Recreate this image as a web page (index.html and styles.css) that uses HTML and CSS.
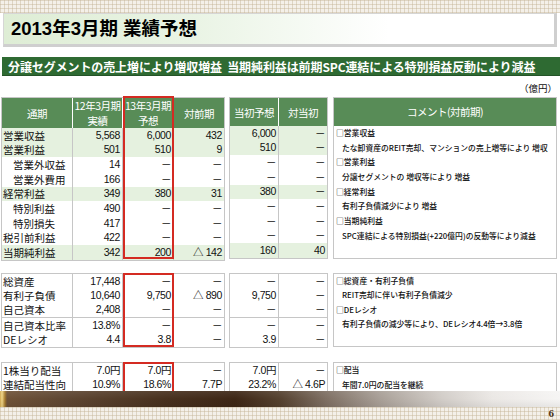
FILE: index.html
```html
<!DOCTYPE html>
<html lang="ja">
<head>
<meta charset="utf-8">
<title>2013年3月期 業績予想</title>
<link rel="stylesheet" href="styles.css">
</head>
<body>
<div class="slide">
  <div class="pattern pattern-top"></div>
  <header class="title-box"><h1 class="title">2013年3月期 業績予想</h1></header>
  <div class="banner">分譲セグメントの売上増により増収増益&nbsp;&nbsp;当期純利益は前期SPC連結による特別損益反動により減益</div>
  <div class="unit">（億円）</div>

  <section class="sec sec-pl">
    <table class="tbl tbl-a">
      <colgroup><col class="c-lab"><col class="c-num"><col class="c-num2"><col class="c-num"></colgroup>
      <thead>
        <tr class="hrow"><th>通期</th><th>12年3月期<br>実績</th><th>13年3月期<br>予想</th><th>対前期</th></tr>
      </thead>
      <tbody>
        <tr class="g"><td class="lab">営業収益</td><td>5,568</td><td>6,000</td><td>432</td></tr>
        <tr class="g"><td class="lab">営業利益</td><td>501</td><td>510</td><td>9</td></tr>
        <tr><td class="lab sub">営業外収益</td><td>14</td><td>－</td><td>－</td></tr>
        <tr><td class="lab sub">営業外費用</td><td>166</td><td>－</td><td>－</td></tr>
        <tr class="g"><td class="lab">経常利益</td><td>349</td><td>380</td><td>31</td></tr>
        <tr><td class="lab sub">特別利益</td><td>490</td><td>－</td><td>－</td></tr>
        <tr><td class="lab sub">特別損失</td><td>417</td><td>－</td><td>－</td></tr>
        <tr><td class="lab">税引前利益</td><td>422</td><td>－</td><td>－</td></tr>
        <tr class="g"><td class="lab">当期純利益</td><td>342</td><td>200</td><td>△ 142</td></tr>
      </tbody>
    </table>
    <table class="tbl tbl-b">
      <colgroup><col class="c-b1"><col class="c-b2"></colgroup>
      <thead>
        <tr class="hrow"><th>当初予想</th><th>対当初</th></tr>
      </thead>
      <tbody>
        <tr class="g"><td>6,000</td><td>－</td></tr>
        <tr class="g"><td>510</td><td>－</td></tr>
        <tr><td>－</td><td>－</td></tr>
        <tr><td>－</td><td>－</td></tr>
        <tr class="g"><td>380</td><td>－</td></tr>
        <tr><td>－</td><td>－</td></tr>
        <tr><td>－</td><td>－</td></tr>
        <tr><td>－</td><td>－</td></tr>
        <tr class="g"><td>160</td><td>40</td></tr>
      </tbody>
    </table>
    <div class="comment">
      <div class="chead">コメント(対前期)</div>
      <div class="cbody">
        <p class="pt">□営業収益</p>
        <p class="ln">たな卸資産のREIT売却、マンションの売上増等により 増収</p>
        <p class="pt">□営業利益</p>
        <p class="ln">分譲セグメントの 増収等により 増益</p>
        <p class="pt">□経常利益</p>
        <p class="ln">有利子負債減少により 増益</p>
        <p class="pt">□当期純利益</p>
        <p class="ln">SPC連結による特別損益(+220億円)の反動等により減益</p>
      </div>
    </div>
    <div class="hl hl-pl"></div>
  </section>

  <section class="sec sec-bs">
    <table class="tbl tbl-a">
      <colgroup><col class="c-lab"><col class="c-num"><col class="c-num2"><col class="c-num"></colgroup>
      <tbody>
        <tr><td class="lab">総資産</td><td>17,448</td><td>－</td><td>－</td></tr>
        <tr><td class="lab">有利子負債</td><td>10,640</td><td>9,750</td><td>△ 890</td></tr>
        <tr><td class="lab">自己資本</td><td>2,408</td><td>－</td><td>－</td></tr>
        <tr class="sep"><td class="lab">自己資本比率</td><td>13.8%</td><td>－</td><td>－</td></tr>
        <tr><td class="lab">DEレシオ</td><td>4.4</td><td>3.8</td><td>－</td></tr>
      </tbody>
    </table>
    <table class="tbl tbl-b">
      <colgroup><col class="c-b1"><col class="c-b2"></colgroup>
      <tbody>
        <tr><td>－</td><td>－</td></tr>
        <tr><td>9,750</td><td>－</td></tr>
        <tr><td>－</td><td>－</td></tr>
        <tr class="sep"><td>－</td><td>－</td></tr>
        <tr><td>3.9</td><td>－</td></tr>
      </tbody>
    </table>
    <div class="comment">
      <div class="cbody">
        <p class="pt">□総資産・有利子負債</p>
        <p class="ln">REIT売却に伴い有利子負債減少</p>
        <p class="pt">□DEレシオ</p>
        <p class="ln">有利子負債の減少等により、DEレシオ4.4倍→3.8倍</p>
      </div>
    </div>
    <div class="hl hl-bs"></div>
  </section>

  <section class="sec sec-dv">
    <table class="tbl tbl-a">
      <colgroup><col class="c-lab"><col class="c-num"><col class="c-num2"><col class="c-num"></colgroup>
      <tbody>
        <tr><td class="lab">1株当り配当</td><td>7.0円</td><td>7.0円</td><td>－</td></tr>
        <tr><td class="lab">連結配当性向</td><td>10.9%</td><td>18.6%</td><td>7.7P</td></tr>
      </tbody>
    </table>
    <table class="tbl tbl-b">
      <colgroup><col class="c-b1"><col class="c-b2"></colgroup>
      <tbody>
        <tr><td>7.0円</td><td>－</td></tr>
        <tr><td>23.2%</td><td>△ 4.6P</td></tr>
      </tbody>
    </table>
    <div class="comment">
      <div class="cbody">
        <p class="pt">□配当</p>
        <p class="ln">年間7.0円の配当を継続</p>
      </div>
    </div>
    <div class="hl hl-dv"></div>
  </section>

  <div class="bottom-bar"></div>
  <footer class="pattern pattern-bottom"><span class="page-no">6</span></footer>
</div>
</body>
</html>
```
FILE: styles.css
```css
html, body {
  margin: 0;
  padding: 0;
  background: #ffffff;
}
.slide {
  width: 560px;
  height: 420px;
  overflow: hidden;
  display: flex;
  flex-direction: column;
  background: #ffffff;
  font-family: "Noto Sans CJK JP", "Liberation Sans", sans-serif;
  color: #111;
}
.pattern {
  background-color: #f4f0e9;
  background-image:
    repeating-linear-gradient(90deg, rgba(196, 180, 150, 0.45) 0 1px, transparent 1px 4px),
    repeating-linear-gradient(0deg, rgba(196, 180, 150, 0.45) 0 1px, transparent 1px 4px);
}
.pattern-top {
  height: 13px;
  flex: none;
}
.title-box {
  flex: none;
  height: 34px;
  box-sizing: border-box;
  margin: 0 3px 0 3px;
  border: 1px solid #d6d6d6;
  border-right: 3px solid #cfcfcf;
  border-bottom: 3px solid #cfcfcf;
  background: linear-gradient(90deg, #deedd5 0%, #eaf4e5 35%, #ffffff 70%);
  display: flex;
  align-items: center;
  padding-left: 7px;
}
.title {
  margin: 0;
  font-family: "Liberation Sans", "Noto Sans CJK JP", sans-serif;
  font-size: 18.5px;
  font-weight: bold;
  color: #000;
  line-height: 1;
}
.banner {
  flex: none;
  margin: 10px 0 0 2px;
  height: 19px;
  line-height: 19px;
  box-sizing: border-box;
  padding-left: 6px;
  background: #2e6a32;
  border-bottom: 1px solid #245428;
  color: #fff;
  font-size: 12px;
  font-weight: bold;
  letter-spacing: -0.1px;
  white-space: nowrap;
}
.unit {
  flex: none;
  height: 21px;
  box-sizing: border-box;
  padding: 6px 3px 0 0;
  text-align: right;
  font-size: 9.5px;
  line-height: 12px;
}
.sec {
  flex: none;
  position: relative;
  display: flex;
  align-items: stretch;
  padding-left: 1px;
  gap: 4px;
}
.sec-pl { height: 162px; }
.sec-bs { height: 74px; margin-top: 14px; }
.sec-dv { height: 29px; margin-top: 15px; }

.tbl {
  border-collapse: separate;
  border-spacing: 0;
  table-layout: fixed;
  border: 1px solid #c6c6c6;
  height: 100%;
  font-family: "Liberation Sans", "Noto Sans CJK JP", sans-serif;
  font-size: 10.5px;
  letter-spacing: -0.4px;
  color: #111;
}
.tbl-a { width: 223px; }
.tbl-b { width: 99px; }
.sec-dv .tbl { border-bottom: none; }
.c-lab { width: 71px; }
.c-num { width: 50px; }
.c-num2 { width: 51px; }
.c-b1 { width: 49px; }
.c-b2 { width: 48px; }

.tbl th {
  background: #588c57;
  color: #fff;
  font-family: "Noto Sans CJK JP", sans-serif;
  font-weight: normal;
  font-size: 10.5px;
  letter-spacing: -0.5px;
  line-height: 15px;
  height: 28px;
  padding: 0;
  border-right: 1px solid #ffffff;
  text-align: center;
}
.tbl th:last-child { border-right: none; }
.tbl td {
  padding: 0 2px 0 0;
  text-align: right;
  white-space: nowrap;
  overflow: hidden;
  border-right: 1px solid #c6c6c6;
  line-height: 13px;
}
.tbl td:last-child { border-right: none; }
.sec-pl .tbl td { height: 14.67px; }
.sec-bs .tbl td { height: 14.4px; }
.sec-dv .tbl td { height: 14.5px; }
.tbl tr.g td { background: #e5f1df; }
.tbl tr.sep td { border-top: 1px solid #c6c6c6; }
.tbl td.lab {
  text-align: left;
  padding: 0 0 0 1px;
  font-family: "Noto Sans CJK JP", sans-serif;
  font-size: 10.5px;
  letter-spacing: 0;
}
.tbl td.lab.sub { padding-left: 11px; }

.comment {
  margin-left: 1px;
  flex: none;
  width: 224px;
  box-sizing: border-box;
  border: 1px solid #c6c6c6;
  display: flex;
  flex-direction: column;
}
.sec-dv .comment { border-bottom: none; }
.chead {
  height: 28px;
  flex: none;
  background: #588c57;
  color: #fff;
  font-size: 10.5px;
  letter-spacing: -0.5px;
  line-height: 28px;
  text-align: center;
}
.cbody {
  padding: 0 0 0 2px;
}
.cbody p {
  margin: 0;
  font-size: 7.8px;
  font-weight: 500;
  line-height: 14.67px;
  white-space: nowrap;
  color: #111;
}
.sec-bs .cbody p { line-height: 14.4px; }
.sec-dv .cbody p { line-height: 14.5px; }
.cbody p.ln { padding-left: 6px; }

.hl {
  position: absolute;
  left: 123px;
  width: 51px;
  border: 2px solid #d42b22;
  box-sizing: border-box;
  pointer-events: none;
}
.hl-pl { top: -1px; height: 163px; }
.hl-bs { top: 0; height: 74px; }
.hl-dv { top: 0; height: 31px; }

.bottom-bar {
  flex: none;
  height: 16px;
  position: relative;
  z-index: 1;
  background:
    linear-gradient(180deg, rgba(255,255,255,0.08) 0%, rgba(0,0,0,0) 50%, rgba(0,0,0,0.06) 100%),
    linear-gradient(90deg, #cfa64e 0px, #f0d688 2px, #a4782c 5px, #6e5238 7px, #5e4632 12%, #47301e 30%, #3e2716 42%, #55412f 50%, #7d6e62 58%, #a9a098 68%, #d2cdc8 79%, #ebe8e5 88%, #f6f5f4 100%);
}
.pattern-bottom {
  flex: 1;
  position: relative;
}
.page-no {
  position: absolute;
  right: 6px;
  top: 0px;
  font-family: "Liberation Serif", serif;
  font-weight: bold;
  font-size: 11px;
  line-height: 13px;
  color: #4a3418;
}
```
